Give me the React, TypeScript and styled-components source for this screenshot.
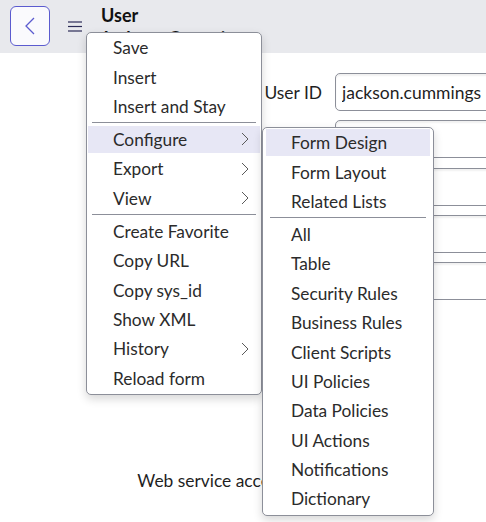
import React from 'react';
import styled, { createGlobalStyle } from 'styled-components';

const GlobalStyle = createGlobalStyle`
  html, body {
    margin: 0;
    padding: 0;
    background: #ffffff;
    overflow: hidden;
  }
  * {
    box-sizing: border-box;
  }
`;

const Page = styled.div`
  position: relative;
  width: 486px;
  height: 522px;
  overflow: hidden;
  background: #ffffff;
  font-family: Lato, "Noto Sans", sans-serif;
  color: #1f1f1f;
`;

const Header = styled.header`
  display: flex;
  align-items: flex-start;
  height: 53px;
  padding: 6px 10px;
  background: #e8e9ed;
`;

const BackButton = styled.button`
  display: flex;
  align-items: center;
  justify-content: center;
  width: 40px;
  height: 40px;
  padding: 0;
  border: 1px solid #5b5bcf;
  border-radius: 6px;
  background: #fafafd;
  color: #5b5bcf;
  cursor: pointer;
`;

const MenuButton = styled.button`
  display: flex;
  align-items: center;
  justify-content: center;
  width: 14px;
  height: 40px;
  margin-left: 18px;
  padding: 0;
  border: none;
  background: transparent;
  color: #2c2c58;
  cursor: pointer;
`;

const Title = styled.h1`
  margin: -2px 0 0 19px;
  font-size: 18px;
  line-height: 23px;
  font-weight: 700;
  color: #111111;
`;

const Form = styled.div`
  display: grid;
  grid-template-columns: 322px 1fr;
  column-gap: 13px;
  row-gap: 9.25px;
  padding-top: 20px;
  align-items: center;
`;

const Label = styled.label`
  text-align: right;
  font-size: 17.4px;
  color: #1f1f1f;
  white-space: nowrap;
`;

const Input = styled.input`
  width: 220px;
  height: 38px;
  padding: 0 6px;
  border: 1px solid #8c8f99;
  border-radius: 5px;
  font-family: inherit;
  font-size: 17.5px;
  color: #1f1f1f;
  background: #ffffff;
  box-shadow: inset 0 2px 2px rgba(0, 0, 0, 0.06);
`;

const CheckCell = styled.div<{ $first?: boolean }>`
  display: flex;
  align-items: center;
  height: 40px;
  margin-top: ${({ $first }) => ($first ? '3px' : '0')};
`;

const Checkbox = styled.span`
  width: 18px;
  height: 18px;
  border: 1px solid #8c8f99;
  border-radius: 3px;
`;

const Menu = styled.div<{ $left: number; $top: number; $width: number; $inset?: number }>`
  position: absolute;
  left: ${({ $left }) => $left}px;
  top: ${({ $top }) => $top}px;
  width: ${({ $width }) => $width}px;
  display: flex;
  flex-direction: column;
  padding: 0 ${({ $inset = 0 }) => $inset}px 1px;
  background: #ffffff;
  border: 1px solid #8c8f99;
  border-radius: 5px;
  box-shadow: 0 4px 10px rgba(0, 0, 0, 0.16);
  z-index: 10;
`;

const Item = styled.div<{ $active?: boolean }>`
  display: flex;
  align-items: center;
  justify-content: space-between;
  flex: none;
  height: 27.4px;
  margin: 1px;
  padding: 0 11px 0 25px;
  font-size: 17.3px;
  color: #2b2b2b;
  white-space: nowrap;
  background: ${({ $active }) => ($active ? '#e7e7f5' : 'transparent')};
`;

const Separator = styled.div`
  flex: none;
  height: 1px;
  margin: 1.3px 5px;
  background: #8c8f99;
`;

const Chevron = () => (
  <svg width="8" height="14" viewBox="0 0 8 14" fill="none">
    <polyline points="1,1 7,7 1,13" stroke="#5a5a5a" strokeWidth="1" />
  </svg>
);

type Entry = { label: string; sub?: boolean; active?: boolean } | 'sep';

const mainItems: Entry[] = [
  { label: 'Save' },
  { label: 'Insert' },
  { label: 'Insert and Stay' },
  'sep',
  { label: 'Configure', sub: true, active: true },
  { label: 'Export', sub: true },
  { label: 'View', sub: true },
  'sep',
  { label: 'Create Favorite' },
  { label: 'Copy URL' },
  { label: 'Copy sys_id' },
  { label: 'Show XML' },
  { label: 'History', sub: true },
  { label: 'Reload form' },
];

const configureItems: Entry[] = [
  { label: 'Form Design', active: true },
  { label: 'Form Layout' },
  { label: 'Related Lists' },
  'sep',
  { label: 'All' },
  { label: 'Table' },
  { label: 'Security Rules' },
  { label: 'Business Rules' },
  { label: 'Client Scripts' },
  { label: 'UI Policies' },
  { label: 'Data Policies' },
  { label: 'UI Actions' },
  { label: 'Notifications' },
  { label: 'Dictionary' },
];

function MenuList({ items }: { items: Entry[] }) {
  return (
    <>
      {items.map((entry, i) =>
        entry === 'sep' ? (
          <Separator key={i} />
        ) : (
          <Item key={i} $active={entry.active}>
            <span>{entry.label}</span>
            {entry.sub && <Chevron />}
          </Item>
        )
      )}
    </>
  );
}

const fields = [
  { label: 'User ID', value: 'jackson.cummings' },
  { label: 'First name', value: 'Jackson' },
  { label: 'Last name', value: 'Cummings' },
  { label: 'Title', value: '' },
  { label: 'Department', value: '' },
];

const checks = ['Password needs reset', 'Locked out', 'Active', 'Web service access only'];

export default function App() {
  return (
    <Page>
      <GlobalStyle />
      <Header>
        <BackButton aria-label="Back">
          <svg width="10" height="18" viewBox="0 0 10 18" fill="none">
            <polyline points="9,1 1,9 9,17" stroke="currentColor" strokeWidth="1.3" />
          </svg>
        </BackButton>
        <MenuButton aria-label="Context menu">
          <svg width="14" height="11" viewBox="0 0 14 11" fill="none">
            <line x1="0" y1="1" x2="14" y2="1" stroke="currentColor" strokeWidth="1.2" />
            <line x1="0" y1="5.5" x2="14" y2="5.5" stroke="currentColor" strokeWidth="1.2" />
            <line x1="0" y1="10" x2="14" y2="10" stroke="currentColor" strokeWidth="1.2" />
          </svg>
        </MenuButton>
        <Title>
          User
          <br />
          Jackson Cummings
        </Title>
      </Header>

      <Form>
        {fields.map((f) => (
          <React.Fragment key={f.label}>
            <Label>{f.label}</Label>
            <Input defaultValue={f.value} readOnly />
          </React.Fragment>
        ))}
        {checks.map((c, i) => (
          <React.Fragment key={c}>
            <Label>{c}</Label>
            <CheckCell $first={i === 0}>
              <Checkbox />
            </CheckCell>
          </React.Fragment>
        ))}
      </Form>

      <Menu $left={86} $top={32} $width={176}>
        <MenuList items={mainItems} />
      </Menu>
      <Menu $left={262} $top={127} $width={172} $inset={2}>
        <MenuList items={configureItems} />
      </Menu>
    </Page>
  );
}
